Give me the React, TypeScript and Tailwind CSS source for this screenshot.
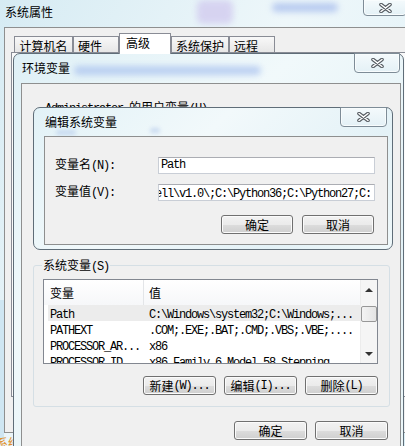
import React from 'react';

function CloseX() {
  return (
    <svg width="13" height="10" viewBox="0 0 13 10">
      <path d="M2 1.5 L11 8.5 M11 1.5 L2 8.5" stroke="#555b61" strokeWidth="3.6" strokeLinecap="round" fill="none" />
      <path d="M2 1.5 L11 8.5 M11 1.5 L2 8.5" stroke="#ffffff" strokeWidth="1.5" strokeLinecap="round" fill="none" />
    </svg>
  );
}

function CloseButton({ className }: { className: string }) {
  return (
    <div className={"absolute flex items-center justify-center rounded-b-[4px] border border-[#7e8c97] bg-[linear-gradient(#f4fafc,#e4f1f6)] shadow-[inset_0_0_0_1px_#f8fcfd] " + className}>
      <CloseX />
    </div>
  );
}

function Btn({ children, className }: { children: React.ReactNode; className: string }) {
  return (
    <div className={"flex h-[19px] items-center justify-center rounded-[3px] border border-[#707070] bg-[linear-gradient(#f2f2f2_0%,#ebebeb_50%,#dddddd_51%,#cfcfcf_100%)] shadow-[inset_0_0_0_1px_#fbfbfb] text-[12px] leading-[16px] text-black " + className}>
      {children}
    </div>
  );
}

function Mono({ children }: { children: React.ReactNode }) {
  return <span className="font-['Liberation_Mono',monospace] text-[12px] tracking-[-1.2px]">{children}</span>;
}

const rows: [string, string, boolean][] = [
  ['Path', 'C:\\Windows\\system32;C:\\Windows;...', true],
  ['PATHEXT', '.COM;.EXE;.BAT;.CMD;.VBS;.VBE;....', false],
  ['PROCESSOR_AR...', 'x86', false],
  ['PROCESSOR_ID...', 'x86 Family 6 Model 58 Stepping...', false],
];

export default function App() {
  return (
    <div className="relative h-[446px] w-[405px] overflow-hidden bg-[linear-gradient(120deg,#d6ebf3_0%,#eef7fa_45%,#dceff6_100%)] font-['Noto_Sans_CJK_SC','Liberation_Sans',sans-serif] text-black">
      {/* blurred glass background bits */}
      <div className="absolute left-[197px] top-[0px] h-[24px] w-[36px] rounded-[6px] bg-[#cfc6ee] opacity-70 blur-[3px]" />
      <div className="absolute left-[272px] top-[3px] h-[9px] w-[66px] rounded-full bg-[#95aeea] opacity-60 blur-[3px]" />
      <div className="absolute left-[0px] top-[300px] h-[140px] w-[4px] bg-[#cfe6f2]" />

      {/* Window 1: 系统属性 */}
      <div className="absolute left-[5px] top-[4px] text-[12px] leading-[16px]">系统属性</div>
      <CloseButton className="left-[363px] top-[-1px] h-[17px] w-[44px]" />
      <div className="absolute left-[4px] top-[27px] h-[406px] w-[420px] border border-[#8e8f8f] bg-[#f0f0f0]">
        <div className="absolute left-[9px] top-[5px] flex items-end">
          <div className="flex h-[18px] w-[59px] items-center justify-center border border-b-0 border-[#898c95] bg-[linear-gradient(#f8f8f8,#e4e4e4)] text-[12px] leading-[16px]">计算机名</div>
          <div className="flex h-[18px] w-[46px] items-center justify-start border border-b-0 border-[#898c95] bg-[linear-gradient(#f8f8f8,#e4e4e4)] pl-[4px] text-[12px] leading-[16px]">硬件</div>
          <div className="relative z-10 flex h-[21px] w-[52px] items-start justify-start border border-b-0 border-[#898c95] bg-white pl-[6px] pt-[1px] text-[12px] leading-[16px]">高级</div>
          <div className="flex h-[18px] w-[58px] items-center justify-center border border-b-0 border-[#898c95] bg-[linear-gradient(#f8f8f8,#e4e4e4)] text-[12px] leading-[16px]">系统保护</div>
          <div className="flex h-[18px] w-[46px] items-center justify-start border border-b-0 border-[#898c95] bg-[linear-gradient(#f8f8f8,#e4e4e4)] pl-[4px] text-[12px] leading-[16px]">远程</div>
        </div>
        <div className="absolute left-[6px] top-[24px] h-[345px] w-[420px] border border-[#898c95] bg-[#fafafa]" />
      </div>
      <div className="absolute left-[-4px] top-[435px] text-[12px] leading-[16px] text-[#e0902a]">系统</div>

      {/* Window 2: 环境变量 */}
      <div className="absolute left-[13px] top-[53px] h-[420px] w-[391px] rounded-t-[7px] border border-[#5f6d78] bg-[linear-gradient(135deg,#dff0f6_0%,#f1f9fb_35%,#e2f1f6_70%,#eef8fa_100%)]">
        <div className="absolute left-[60px] top-[12px] h-[9px] w-[187px] rounded-full bg-[#a6bfee] opacity-70 blur-[3px]" />
        <div className="absolute left-[8px] top-[6px] text-[12px] leading-[16px]">环境变量</div>
        <CloseButton className="left-[340px] top-[-1px] h-[20px] w-[46px]" />
        <div className="absolute left-[7px] top-[29px] h-[400px] w-[380px] border border-[#8e8f8f] bg-[#f0f0f0]">
          <div className="flex flex-col">
            <div className="ml-[23px] mt-[15px] h-[16px] whitespace-nowrap text-[12px] leading-[16px]">
              <Mono>Administrator </Mono>的用户变量<Mono>(U)</Mono>
            </div>
            <div className="h-[150px]" />
            <div className="relative ml-[11px] w-[357px] rounded-[3px] border border-[#d5dfe5] pb-[11px] pl-[9px] pr-[11px] pt-[13px]">
              <div className="absolute left-[8px] top-[-9px] bg-[#f0f0f0] px-[1px] text-[12px] leading-[16px]">
                系统变量<Mono>(S)</Mono>
              </div>
              <div className="flex h-[85px] w-[335px] overflow-hidden border border-[#828790] bg-white">
                <div className="flex w-[316px] flex-col">
                  <div className="flex h-[25px] shrink-0 items-center bg-[linear-gradient(#ffffff,#f6f7f9)] text-[12px] leading-[16px]">
                    <div className="flex h-full w-[100px] items-center border-r border-[#e3e5e8] pl-[6px]">变量</div>
                    <div className="pl-[5px]">值</div>
                  </div>
                  {rows.map(([k, v, sel]) => (
                    <div key={k} className={sel ? "ml-[4px] flex h-[16px] shrink-0 items-center bg-[#ececec] leading-[16px]" : "ml-[4px] flex h-[16px] shrink-0 items-center leading-[16px]"}>
                      <div className="w-[101px] whitespace-nowrap pl-[2px]"><Mono>{k}</Mono></div>
                      <div className="whitespace-nowrap"><Mono>{v}</Mono></div>
                    </div>
                  ))}
                </div>
                <div className="relative w-[17px] border-l border-[#ececec] bg-[#f5f5f5]">
                  <svg className="absolute left-[4px] top-[7px]" width="8" height="5" viewBox="0 0 8 5"><path d="M0 5 L4 1 L8 5 Z" fill="#333" /></svg>
                  <div className="absolute left-[0px] top-[26px] h-[16px] w-[16px] rounded-[2px] border border-[#979797] bg-[linear-gradient(90deg,#f3f3f3,#e4e4e4)]" />
                  <svg className="absolute left-[4px] top-[72px]" width="8" height="5" viewBox="0 0 8 5"><path d="M0 0 L4 4 L8 0 Z" fill="#333" /></svg>
                </div>
              </div>
              <div className="mt-[12px] flex justify-end gap-[8px]">
                <Btn className="w-[73px]">新建<Mono>(W)...</Mono></Btn>
                <Btn className="w-[73px]">编辑<Mono>(I)...</Mono></Btn>
                <Btn className="w-[73px]">删除<Mono>(L)</Mono></Btn>
              </div>
            </div>
            <div className="mt-[14px] flex justify-end gap-[8px] pr-[12px]">
              <Btn className="w-[73px]">确定</Btn>
              <Btn className="w-[73px]">取消</Btn>
            </div>
          </div>
        </div>
      </div>

      {/* Window 3: 编辑系统变量 */}
      <div className="absolute left-[33px] top-[107px] h-[143px] w-[360px] rounded-[7px] border border-[#5f6d78] bg-[linear-gradient(135deg,#e2f2f7_0%,#f2f9fb_40%,#e4f2f7_75%,#eff8fa_100%)]">
        <div className="absolute left-[22px] top-[22px] h-[5px] w-[20px] rounded-full bg-[#b9cdec] opacity-70 blur-[2px]" />
        <div className="absolute left-[116px] top-[20px] h-[5px] w-[10px] rounded-full bg-[#b9cdec] opacity-70 blur-[2px]" />
        <div className="absolute left-[11px] top-[6px] text-[12px] leading-[16px]">编辑系统变量</div>
        <CloseButton className="left-[306px] top-[-1px] h-[20px] w-[47px]" />
        <div className="absolute left-[10px] top-[28px] h-[109px] w-[344px] border border-[#8e8f8f] bg-[#f0f0f0]">
          <div className="flex flex-col">
            <div className="mt-[19px] flex items-center">
              <div className="w-[113px] pl-[10px] text-[12px] leading-[16px]">变量名<Mono>(N):</Mono></div>
              <div className="flex h-[17px] w-[217px] items-center border border-[#c9ced6] border-t-[#abadb3] bg-white pl-[2px] leading-[15px]">
                <Mono>Path</Mono>
              </div>
            </div>
            <div className="mt-[9px] flex items-center">
              <div className="w-[113px] pl-[10px] text-[12px] leading-[16px]">变量值<Mono>(V):</Mono></div>
              <div className="flex h-[17px] w-[217px] items-center overflow-hidden whitespace-nowrap border border-[#c9ced6] border-t-[#abadb3] bg-white leading-[15px]">
                <div className="-ml-[4px]"><Mono>ell\v1.0\;C:\Python36;C:\Python27;C:</Mono></div>
              </div>
            </div>
            <div className="mt-[14px] flex justify-end gap-[9px] pr-[13px]">
              <Btn className="w-[72px]">确定</Btn>
              <Btn className="w-[72px]">取消</Btn>
            </div>
          </div>
        </div>
      </div>
    </div>
  );
}
